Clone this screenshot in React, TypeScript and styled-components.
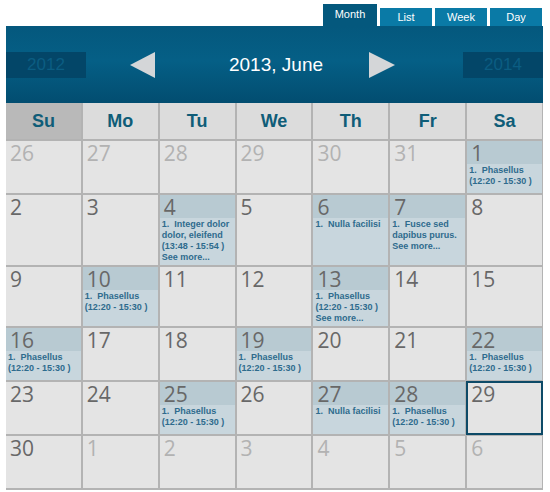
import styled, { createGlobalStyle } from 'styled-components'

const GlobalStyle = createGlobalStyle`
  body {
    margin: 0;
    background: #fff;
    font-family: "Liberation Sans", Arial, sans-serif;
  }
`;

interface CalEvent {
  title: string;
  time?: string;
}

interface Day {
  day: number;
  other?: boolean;
  today?: boolean;
  events?: CalEvent[];
  more?: boolean;
}

const phasellus: CalEvent = { title: 'Phasellus', time: '(12:20 - 15:30 )' };

const weeks: Day[][] = [
  [
    { day: 26, other: true }, { day: 27, other: true }, { day: 28, other: true },
    { day: 29, other: true }, { day: 30, other: true }, { day: 31, other: true },
    { day: 1, events: [phasellus] },
  ],
  [
    { day: 2 }, { day: 3 },
    { day: 4, events: [{ title: 'Integer dolor dolor, eleifend', time: '(13:48 - 15:54 )' }], more: true },
    { day: 5 },
    { day: 6, events: [{ title: 'Nulla facilisi' }] },
    { day: 7, events: [{ title: 'Fusce sed dapibus purus.' }], more: true },
    { day: 8 },
  ],
  [
    { day: 9 }, { day: 10, events: [phasellus] }, { day: 11 }, { day: 12 },
    { day: 13, events: [phasellus], more: true }, { day: 14 }, { day: 15 },
  ],
  [
    { day: 16, events: [phasellus] }, { day: 17 }, { day: 18 }, { day: 19, events: [phasellus] },
    { day: 20 }, { day: 21 }, { day: 22, events: [phasellus] },
  ],
  [
    { day: 23 }, { day: 24 }, { day: 25, events: [phasellus] }, { day: 26 },
    { day: 27, events: [{ title: 'Nulla facilisi' }] }, { day: 28, events: [phasellus] },
    { day: 29, today: true },
  ],
  [
    { day: 30 }, { day: 1, other: true }, { day: 2, other: true }, { day: 3, other: true },
    { day: 4, other: true }, { day: 5, other: true }, { day: 6, other: true },
  ],
];

const weekdays = ['Su', 'Mo', 'Tu', 'We', 'Th', 'Fr', 'Sa'];
const tabs = ['Month', 'List', 'Week', 'Day'];

const Wrapper = styled.div`
  width: 537px;
  padding: 4px 0 0 6px;
`;

const Tabs = styled.div`
  display: flex;
  justify-content: flex-end;
  align-items: flex-end;
  gap: 2px;
  padding-right: 1px;
  height: 22px;
`;

const Tab = styled.div<{ $active?: boolean }>`
  width: ${(p) => (p.$active ? 54 : 52)}px;
  height: ${(p) => (p.$active ? 22 : 18)}px;
  margin-left: ${(p) => (p.$active ? 0 : 1)}px;
  background: ${(p) => (p.$active ? '#04587d' : '#0a7aa6')};
  color: #fff;
  font-size: 11px;
  display: flex;
  align-items: center;
  justify-content: center;
  padding-bottom: ${(p) => (p.$active ? 3 : 0)}px;
  box-sizing: border-box;
`;

const Nav = styled.div`
  height: 77px;
  display: flex;
  align-items: center;
  background: linear-gradient(#04587d 0%, #055f86 45%, #024d70 100%);
`;

const YearBox = styled.div`
  width: 80px;
  height: 26px;
  background: #034668;
  color: #0b5d82;
  font-size: 17px;
  display: flex;
  align-items: center;
  justify-content: center;
`;

const Arrow = styled.div<{ $dir: 'left' | 'right' }>`
  width: 0;
  height: 0;
  border-top: 13px solid transparent;
  border-bottom: 13px solid transparent;
  ${(p) =>
    p.$dir === 'left'
      ? 'border-right: 25px solid #d4d6d8; margin-left: 44px;'
      : 'border-left: 26px solid #d4d6d8; margin-right: 68px;'}
`;

const Title = styled.div`
  flex: 1;
  text-align: center;
  padding-left: 28px;
  color: #fff;
  font-size: 19px;
`;

const Grid = styled.div`
  display: grid;
  grid-template-columns: repeat(7, 1fr);
  grid-template-rows: 36px;
  grid-auto-rows: minmax(52px, auto);
  gap: 2px;
  background: #b3b3b3;
  padding: 0 1px 2px 0;
`;

const WeekdayCell = styled.div<{ $sunday?: boolean }>`
  background: ${(p) => (p.$sunday ? '#b9b9b9' : '#dcdcdc')};
  color: #0f5d78;
  font-weight: bold;
  font-size: 18px;
  display: flex;
  align-items: center;
  justify-content: center;
`;

const Cell = styled.div<{ $today?: boolean; $hasEvents?: boolean }>`
  background: ${(p) => (p.$hasEvents ? '#c8d6dd' : '#e4e4e4')};
  box-sizing: border-box;
  ${(p) => p.$today && 'box-shadow: inset 0 0 0 2px #0d4a67; margin: -1px; position: relative;'}
  padding-bottom: 2px;
`;

const DayNumber = styled.div<{ $other?: boolean; $hasEvents?: boolean; $today?: boolean }>`
  height: 23px;
  line-height: 25px;
  padding-left: ${(p) => (p.$today ? 5 : 4)}px;
  padding-top: ${(p) => (p.$today ? 1 : 0)}px;
  font-family: "Open Sans", sans-serif;
  font-size: 21px;
  color: ${(p) => (p.$other ? '#b2b2b2' : '#686868')};
  background: ${(p) => (p.$hasEvents ? '#b8cad2' : 'transparent')};
`;

const Events = styled.div`
  padding: 1px 1px 0 2px;
  font-size: 9px;
  font-weight: bold;
  line-height: 11px;
  color: #2e6b8d;
`;

const EventLine = styled.div`
  white-space: normal;
`;

const More = styled.div`
  color: #2e6b8d;
`;

export default function App() {
  return (
    <>
      <GlobalStyle />
      <Wrapper>
        <Tabs>
          {tabs.map((t) => (
            <Tab key={t} $active={t === 'Month'}>{t}</Tab>
          ))}
        </Tabs>
        <Nav>
          <YearBox>2012</YearBox>
          <Arrow $dir="left" />
          <Title>2013, June</Title>
          <Arrow $dir="right" />
          <YearBox>2014</YearBox>
        </Nav>
        <Grid>
          {weekdays.map((d, i) => (
            <WeekdayCell key={d} $sunday={i === 0}>{d}</WeekdayCell>
          ))}
          {weeks.flat().map((d, i) => {
            const hasEvents = !!d.events?.length;
            return (
              <Cell key={i} $today={d.today} $hasEvents={hasEvents}>
                <DayNumber $other={d.other} $hasEvents={hasEvents} $today={d.today}>{d.day}</DayNumber>
                {hasEvents && (
                  <Events>
                    {d.events!.map((e, j) => (
                      <div key={j}>
                        <EventLine>{`${j + 1}.\u00a0\u00a0${e.title}`}</EventLine>
                        {e.time && <EventLine>{e.time}</EventLine>}
                      </div>
                    ))}
                    {d.more && <More>See more...</More>}
                  </Events>
                )}
              </Cell>
            );
          })}
        </Grid>
      </Wrapper>
    </>
  );
}
